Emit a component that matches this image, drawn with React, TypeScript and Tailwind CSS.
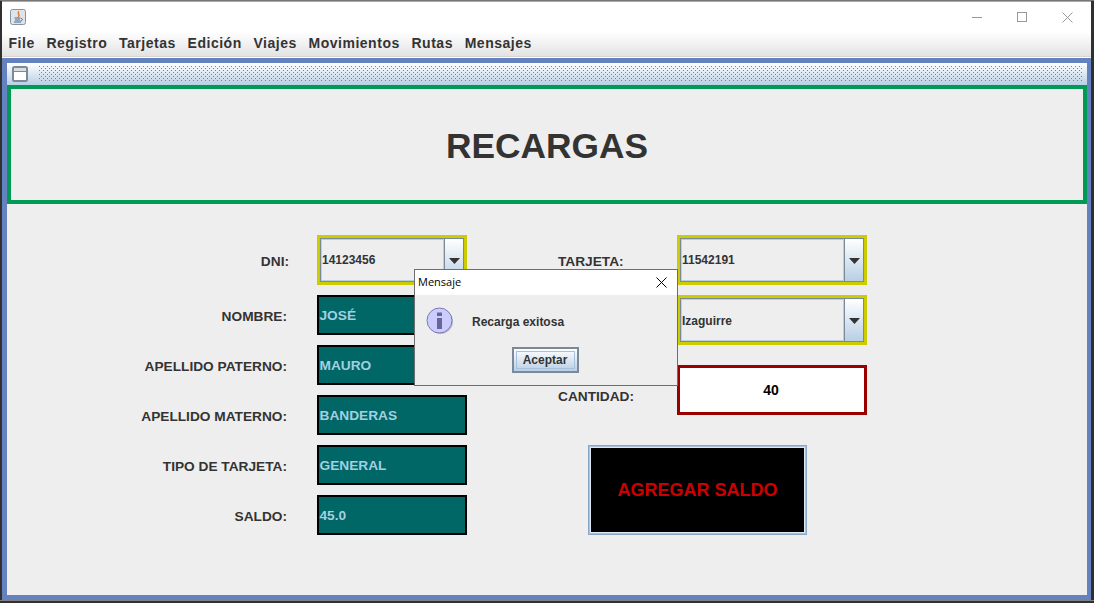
import React from "react";

const sans = "font-['Liberation_Sans',Arial,sans-serif]";
const label = "text-[13.7px] font-bold text-[#333333] whitespace-nowrap";

function Combo({ text, w, lower }: { text: string; w: string; lower?: boolean }) {
  return (
    <div className={`${w} h-[50px] border-[3px] border-[#cccc00] flex`}>
      <div className="flex-1 flex border border-[#7a8a99]">
        <div className={`flex-1 flex items-center ${lower ? "pt-[1px]" : "pb-[1px]"} border border-[#b8cfe5] bg-[#eeeeee] text-[12px] font-bold text-[#333333]`}>{text}</div>
        <div className="w-[19px] border-l border-[#7a8a99] bg-gradient-to-b from-[#ffffff] to-[#b8cfe5] flex items-center justify-center pt-[2px]">
          <svg width="11" height="6" viewBox="0 0 11 6"><path d="M0 0H11L5.5 6Z" fill="#333333" /></svg>
        </div>
      </div>
    </div>
  );
}

function Field({ text }: { text: string }) {
  return (
    <div className="w-[150px] h-[40px] border-2 border-black bg-[#006666] flex items-center pl-[0.5px] pt-[2px] text-[13.7px] font-bold text-[#a3d0e0]">
      {text}
    </div>
  );
}

function Row({ name, text }: { name: string; text: string }) {
  return (
    <div className="flex items-center h-[40px]">
      <div className={`w-[280px] pt-[4px] text-right mr-[30px] ${label}`}>{name}</div>
      <Field text={text} />
    </div>
  );
}

export default function App() {
  return (
    <div className={`w-[1094px] h-[603px] relative overflow-hidden bg-[#303030] ${sans}`}>
      <div className="absolute inset-x-0 top-0 h-[1px] bg-[#777777]" />
      <div className="ml-[2px] mt-[1px] w-[1089px] h-[599px] flex flex-col border-t border-[#a9a9a9] bg-white">
        <div className="h-[30px] shrink-0 flex items-center pl-[8px] bg-white">
          <svg width="16" height="16" viewBox="0 0 16 16">
            <rect x="0.5" y="0.5" width="15" height="15" rx="2" fill="#dfe4ea" stroke="#8592a0" />
            <path d="M8.8 2C6.5 4.5 9.8 5.5 8 8.5C11 6.5 8 5 8.8 2Z" fill="#e8701a" stroke="#e8701a" strokeWidth="0.6" />
            <path d="M4.5 9H10.5M5 11H10M4 13H11" stroke="#4a6a8a" strokeWidth="1" />
            <path d="M11 9.5C13 9.5 13 11.5 10.5 12" stroke="#4a6a8a" fill="none" />
          </svg>
          <div className="flex-1" />
          <div className="flex items-center">
            <div className="w-[10px] h-[1px] bg-[#999999] mr-[35px]" />
            <div className="w-[10px] h-[10px] border border-[#999999] mr-[35px]" />
            <svg width="11" height="11" viewBox="0 0 11 11" className="mr-[18px]"><path d="M0.5 0.5L10.5 10.5M10.5 0.5L0.5 10.5" stroke="#999999" /></svg>
          </div>
        </div>
        <div className="h-[25px] shrink-0 flex items-center gap-[11.7px] pl-[6.5px] pb-[1px] bg-gradient-to-b from-[#ffffff] to-[#e3e3e3] text-[14px] font-bold text-[#333333] border-b border-[#d8d4cf]">
          {["File", "Registro", "Tarjetas", "Edición", "Viajes", "Movimientos", "Rutas", "Mensajes"].map((m) => (
            <span key={m} className="tracking-[0.52px]">{m}</span>
          ))}
        </div>
        <div className="flex-1 flex flex-col mt-[1px] bg-[#6382bf] pl-[5px] pr-[4px] pt-[5px] pb-[5px]">
          <div className="h-[22px] shrink-0 flex items-center pl-[5px] pr-[4px] bg-gradient-to-b from-[#ffffff] to-[#b8cfe5]">
            <svg width="16" height="16" viewBox="0 0 16 16">
              <rect x="1" y="1" width="14" height="14" rx="1.5" fill="#ffffff" stroke="#7a8a99" strokeWidth="2" />
              <rect x="2" y="2" width="12" height="3" fill="#d8dee4" />
              <path d="M2 5.5H14" stroke="#7a8a99" />
            </svg>
            <svg className="flex-1 h-[16px] ml-[11px]" height="16">
              <defs>
                <pattern id="dots" width="4" height="4" patternUnits="userSpaceOnUse">
                  <rect x="0" y="0" width="1" height="1" fill="#6382bf" />
                  <rect x="2" y="2" width="1" height="1" fill="#6382bf" />
                </pattern>
              </defs>
              <rect width="100%" height="16" fill="url(#dots)" />
            </svg>
          </div>
          <div className="flex-1 bg-[#eeeeee] flex flex-col">
            <div className="h-[119px] shrink-0 pt-[4px] border-4 border-[#009955] flex items-center justify-center text-[35.3px] font-bold text-[#333333]">
              RECARGAS
            </div>
            <div className="flex mt-[31px]">
              <div className="flex flex-col">
                <div className="flex items-center h-[50px] mb-[10px]">
                  <div className={`w-[282px] pt-[4px] text-right mr-[28px] ${label}`}>DNI:</div>
                  <Combo text="14123456" w="w-[150px]" />
                </div>
                <div className="flex flex-col gap-[10px]">
                  <Row name="NOMBRE:" text="JOSÉ" />
                  <Row name="APELLIDO PATERNO:" text="MAURO" />
                  <Row name="APELLIDO MATERNO:" text="BANDERAS" />
                  <Row name="TIPO DE TARJETA:" text="GENERAL" />
                  <Row name="SALDO:" text="45.0" />
                </div>
              </div>
              <div className="flex flex-col ml-[91px]">
                <div className="flex h-[50px] items-center">
                  <div className={`w-[119px] pt-[4px] ${label}`}>TARJETA:</div>
                  <Combo text="11542191" w="w-[190px]" />
                </div>
                <div className="flex h-[50px] mt-[10px] ml-[119px]">
                  <Combo text="Izaguirre" w="w-[190px]" lower />
                </div>
                <div className="flex h-[50px] mt-[20px] items-center">
                  <div className={`w-[119px] pt-[14px] ${label}`}>CANTIDAD:</div>
                  <div className="w-[190px] h-[50px] border-[3px] border-[#990000] bg-white flex items-center justify-center pr-[2px] text-[14px] font-bold text-black">40</div>
                </div>
                <div className="ml-[30px] mt-[30px] w-[219px] h-[90px] border border-[#8aa6c6] flex">
                  <div className="flex-1 border border-[#a8c0dc] flex">
                    <div className="flex-1 border border-[#dfe8f2] bg-black flex items-center justify-center text-[18px] font-bold text-[#cc0000]">
                      AGREGAR SALDO
                    </div>
                  </div>
                </div>
              </div>
            </div>
          </div>
        </div>
      </div>
      <div className="h-[1px] bg-[#808080]" />

      {/* Dialog */}
      <div className="absolute left-[414px] top-[269px] w-[264px] h-[117px] border border-[#6d6d6d] bg-[#eeeeee] flex flex-col">
        <div className="h-[25px] shrink-0 bg-white flex items-center justify-between pl-[3px] pr-[10px] font-['Open_Sans',sans-serif] text-[11px] text-black">
          <span>Mensaje</span>
          <svg width="11" height="11" viewBox="0 0 11 11"><path d="M0.5 0.5L10.5 10.5M10.5 0.5L0.5 10.5" stroke="#000000" /></svg>
        </div>
        <div className="flex items-center h-[52px] pl-[11px]">
          <svg width="28" height="28" viewBox="0 0 28 28" className="mb-[1px]">
            <circle cx="14.5" cy="14.5" r="12.5" fill="#9a9ab0" opacity="0.6" />
            <circle cx="13.5" cy="13.5" r="12.5" fill="#ccccff" stroke="#7a7ab0" />
            <rect x="11" y="11" width="5" height="11" fill="#66669a" />
            <rect x="11" y="5.5" width="5" height="3.5" fill="#66669a" />
          </svg>
          <span className="ml-[18px] pt-[1px] text-[12px] font-bold text-[#333333]">Recarga exitosa</span>
        </div>
        <div className="flex justify-center">
          <div className="w-[67px] h-[26px] ml-[-1px] border-[2px] border-[#7a8a99] bg-gradient-to-b from-[#ffffff] to-[#b8cfe5] p-[2px] flex">
            <div className="flex-1 border border-[#a8c0dc] flex items-center justify-center text-[12px] font-bold text-[#333333] pr-[1px]">Aceptar</div>
          </div>
        </div>
      </div>
    </div>
  );
}
